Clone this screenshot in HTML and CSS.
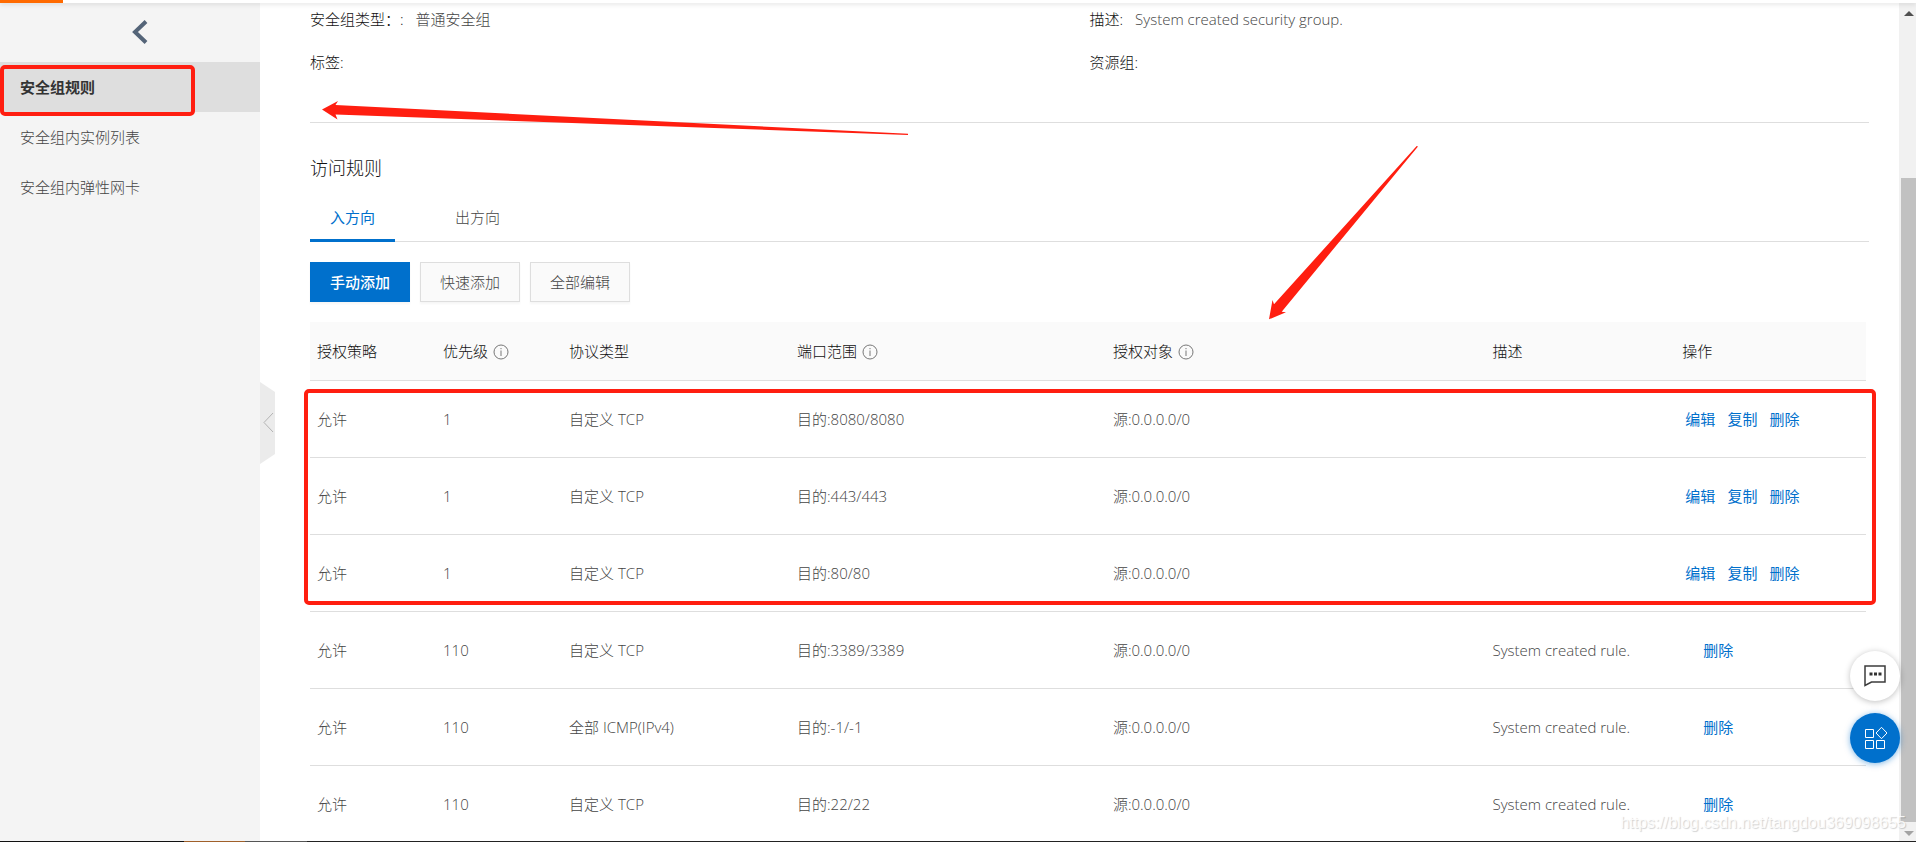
FILE: index.html
```html
<!DOCTYPE html>
<html lang="zh-CN">
<head>
<meta charset="utf-8">
<title>安全组规则</title>
<link rel="stylesheet" href="styles.css">
</head>
<body>
<svg class="defs" width="0" height="0" aria-hidden="true">
  <symbol id="info" viewBox="0 0 16 16"><circle cx="8" cy="8" r="7" fill="none" stroke="currentColor"/><path d="M8 6.5V12M8 4v1.2" stroke="currentColor" fill="none"/></symbol>
</svg>
<header class="topbar"><div class="topbar-accent"></div></header>
<div class="layout">
  <nav class="sidebar">
    <button class="back" aria-label="返回"><svg width="16" height="24" viewBox="0 0 16 24"><path d="M14 1.5L3 12l11 10.500" fill="none" stroke="#546478" stroke-width="4"/></svg></button>
    <ul class="menu">
      <li><a class="menu-item active" href="#">安全组规则</a></li>
      <li><a class="menu-item" href="#">安全组内实例列表</a></li>
      <li><a class="menu-item" href="#">安全组内弹性网卡</a></li>
    </ul>
    <div class="mark mark-menu"></div>
    <button class="handle" aria-label="收起"><svg width="15" height="82" viewBox="0 0 15 82"><path d="M0 0L15 10V72L0 82Z" fill="#ebebeb"/><path d="M13 31L4 40.500L13 50" fill="none" stroke="#b4b4b4"/></svg></button>
  </nav>
  <main class="content">
    <dl class="info">
      <div class="info-item"><dt>安全组类型：:</dt><dd>普通安全组</dd></div>
      <div class="info-item"><dt>描述:</dt><dd>System created security group.</dd></div>
      <div class="info-item"><dt>标签:</dt><dd></dd></div>
      <div class="info-item"><dt>资源组:</dt><dd></dd></div>
    </dl>
    <h2 class="title">访问规则</h2>
    <div class="tabs" role="tablist">
      <button class="tab selected" role="tab" aria-selected="true">入方向</button>
      <button class="tab" role="tab" aria-selected="false">出方向</button>
    </div>
    <div class="toolbar">
      <button class="btn primary">手动添加</button>
      <button class="btn">快速添加</button>
      <button class="btn">全部编辑</button>
    </div>
    <div class="table-wrap">
      <table class="rules">
        <colgroup><col class="c-policy"><col class="c-priority"><col class="c-protocol"><col class="c-port"><col class="c-object"><col class="c-desc"><col class="c-ops"></colgroup>
        <thead><tr>
          <th>授权策略</th>
          <th>优先级<svg class="tip"><use href="#info"/></svg></th>
          <th>协议类型</th>
          <th>端口范围<svg class="tip"><use href="#info"/></svg></th>
          <th>授权对象<svg class="tip"><use href="#info"/></svg></th>
          <th>描述</th>
          <th>操作</th>
        </tr></thead>
        <tbody>
          <tr><td>允许</td><td>1</td><td>自定义 TCP</td><td>目的:8080/8080</td><td>源:0.0.0.0/0</td><td></td><td><div class="ops"><a href="#">编辑</a><a href="#">复制</a><a href="#">删除</a></div></td></tr>
          <tr><td>允许</td><td>1</td><td>自定义 TCP</td><td>目的:443/443</td><td>源:0.0.0.0/0</td><td></td><td><div class="ops"><a href="#">编辑</a><a href="#">复制</a><a href="#">删除</a></div></td></tr>
          <tr><td>允许</td><td>1</td><td>自定义 TCP</td><td>目的:80/80</td><td>源:0.0.0.0/0</td><td></td><td><div class="ops"><a href="#">编辑</a><a href="#">复制</a><a href="#">删除</a></div></td></tr>
          <tr><td>允许</td><td>110</td><td>自定义 TCP</td><td>目的:3389/3389</td><td>源:0.0.0.0/0</td><td>System created rule.</td><td><div class="ops single"><a href="#">删除</a></div></td></tr>
          <tr><td>允许</td><td>110</td><td>全部 ICMP(IPv4)</td><td>目的:-1/-1</td><td>源:0.0.0.0/0</td><td>System created rule.</td><td><div class="ops single"><a href="#">删除</a></div></td></tr>
          <tr><td>允许</td><td>110</td><td>自定义 TCP</td><td>目的:22/22</td><td>源:0.0.0.0/0</td><td>System created rule.</td><td><div class="ops single"><a href="#">删除</a></div></td></tr>
        </tbody>
      </table>
      <div class="mark mark-rules"></div>
    </div>
  </main>
  <div class="scrollbar">
    <span class="arrow up"></span>
    <div class="thumb"></div>
    <span class="arrow down"></span>
  </div>
</div>
<svg class="arrows" width="1916" height="842" aria-hidden="true">
  <path fill="#ff1e10" d="M322 109.500L338 101L335.500 105L908 133.700V135L335.500 114.500L337.500 119.500Z"/>
  <path fill="#ff1e10" d="M1269 319.300L1272.500 300L1274 304.300L1416.700 146L1418 146.500L1281.700 311.700L1286 312.300Z"/>
</svg>
<div class="floaters">
  <button class="fab" aria-label="反馈"><svg width="24" height="24" viewBox="0 0 24 24"><path d="M2 2h20v16H8.500L2 21.500Z" fill="none" stroke="#3c3c3c" stroke-width="1.500"/><path d="M6.500 8.500h3v3h-3zM11 8.500h3v3h-3zM15.500 8.500h3v3h-3z" fill="#333"/></svg></button>
  <button class="fab blue" aria-label="应用"><svg width="24" height="24" viewBox="0 0 24 24" fill="none" stroke="#fff"><path d="M2.500 3.500h8v8h-8zM2.500 14.500h8v8h-8zM13.500 14.500h8v8h-8zM18.500 1.300L24 7l-5.500 5.700L13 7z"/></svg></button>
</div>
<div class="watermark">https://blog.csdn.net/tangdou369098655</div>
<div class="taskbar"></div>
</body>
</html>
```
FILE: styles.css
```css
* { box-sizing: border-box; }
body {
  margin: 0;
  height: 100vh;
  overflow: hidden;
  position: relative;
  display: flex;
  flex-direction: column;
  background: #fff;
  color: #444;
  font: 300 15px/20px "Open Sans", "Noto Sans CJK SC", sans-serif;
}
button { padding: 0; border: 0; background: none; font: inherit; color: inherit; cursor: pointer; }
a { color: #0070cc; text-decoration: none; }
.defs { position: absolute; }

.topbar { flex: none; position: relative; z-index: 2; height: 3px; background: #fff; box-shadow: 0 1px 5px rgba(0, 0, 0, .15); }
.topbar-accent { width: 63px; height: 3px; background: #ff6a00; }

.layout { flex: 1; min-height: 0; display: flex; }

.sidebar { position: relative; flex: none; width: 260px; background: #f4f4f4; }
.back { display: flex; align-items: center; justify-content: center; width: 100%; height: 59px; padding: 0 0 2px 20px; }
.menu { list-style: none; margin: 0; padding: 0; }
.menu-item { display: flex; align-items: center; height: 50px; padding-left: 20px; color: #444; }
.menu-item.active { background: #dedede; color: #333; font-weight: 700; }
.handle { position: absolute; left: 100%; top: 379px; display: block; height: 82px; }
.handle svg { display: block; }

.mark { position: absolute; border: 4px solid #ff1e10; border-radius: 5px; pointer-events: none; }
.mark-menu { left: 0; top: 62px; width: 195px; height: 51px; }
.mark-rules { left: -6px; right: -10px; top: 67px; height: 216px; }

.content { flex: 1; min-width: 0; padding: 6px 30px 0 50px; }
.info { display: grid; grid-template-columns: 1fr 1fr; row-gap: 23px; margin: 0; height: 114px; align-content: start; border-bottom: 1px solid #dedede; }
.info-item { display: flex; gap: 12px; }
.info dt { color: #111; }
.info dd { margin: 0; }
.title { margin: 33px 0 0; font-size: 18px; line-height: 24px; font-weight: 300; color: #111; }
.tabs { display: flex; gap: 40px; margin-top: 16px; border-bottom: 1px solid #dedede; }
.tab { height: 46px; padding: 0 20px 2px; margin-bottom: -1px; border-bottom: 3px solid transparent; }
.tab.selected { color: #0070cc; border-color: #0070cc; font-weight: 400; }
.toolbar { display: flex; gap: 10px; margin-top: 20px; }
.btn { width: 100px; height: 40px; border: 1px solid #dedede; background: #fafafa; box-shadow: 0 2px 2px rgba(0, 0, 0, .04); }
.btn.primary { background: #0070cc; border-color: #0070cc; color: #fff; font-weight: 500; }

.table-wrap { position: relative; margin: 20px 3px 0 0; }
.rules { width: 100%; table-layout: fixed; border-collapse: separate; border-spacing: 0; }
.rules th, .rules td { padding: 0 7px; text-align: left; border-bottom: 1px solid #dedede; }
.rules th { height: 59px; background: #fafafa; font-weight: 300; color: #111; }
.rules td { height: 77px; }
.c-policy, .c-priority { width: 8.1%; }
.c-protocol { width: 14.65%; }
.c-port { width: 20.3%; }
.c-object { width: 24.4%; }
.c-desc { width: 12.2%; }
.tip { width: 16px; height: 16px; margin-left: 5px; vertical-align: -3px; color: #777; }
.ops { display: flex; gap: 12px; padding-left: 3px; font-weight: 400; }
.ops.single { padding-left: 21px; }

.scrollbar { flex: none; width: 17px; padding: 0 0 0 2px; display: flex; flex-direction: column; align-items: center; background: #f1f1f1; }
.thumb { width: 100%; flex: 1; margin: 162px 0 9px; background: #c1c1c1; }
.arrow { border: 5px solid transparent; }
.up { margin-top: 4px; border-bottom-color: #505050; border-top-width: 4px; }
.down { margin-bottom: 5px; border-top-color: #a3a3a3; border-bottom-width: 0; }

.arrows { position: absolute; left: 0; top: 0; pointer-events: none; }
.floaters { position: absolute; right: 16px; bottom: 79px; display: grid; gap: 12px; }
.fab { display: flex; align-items: center; justify-content: center; width: 50px; height: 50px; border-radius: 50%; background: #fff; box-shadow: 0 1px 6px rgba(0, 0, 0, .25); }
.fab.blue { background: #0070cc; box-shadow: 0 1px 6px rgba(0, 112, 204, .5); }
.watermark { position: absolute; right: 10px; bottom: 9px; font: 16px/20px "Liberation Sans", sans-serif; color: rgba(255, 255, 255, .85); text-shadow: 1px 1px 1px rgba(0, 0, 0, .18); }
.taskbar { flex: none; height: 1px; background: linear-gradient(90deg, #111 184px, #a0602a 184px 245px, #555 245px 307px, #222 307px); }
```
